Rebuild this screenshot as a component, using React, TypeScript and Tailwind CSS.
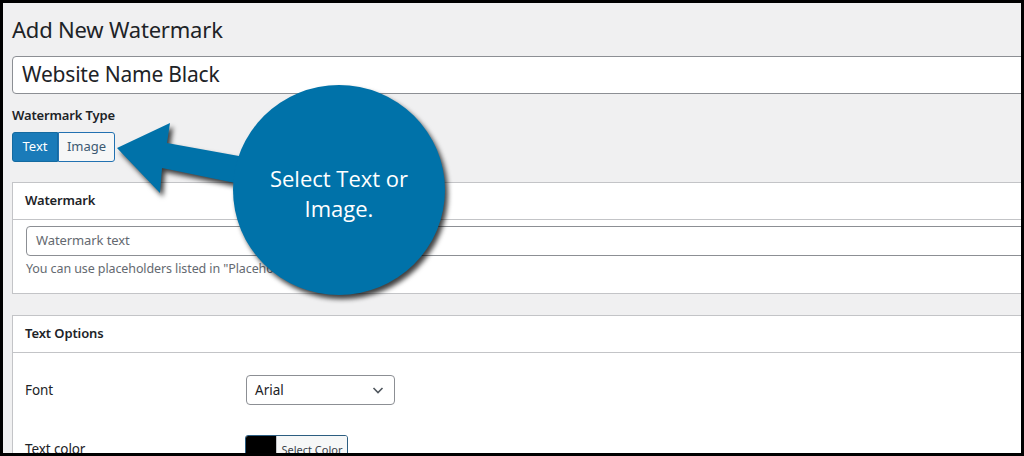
import React from "react";

const F = { fontFamily: '"Segoe UI", "Noto Sans", "Open Sans", sans-serif' };

export default function App() {
  return (
    <div
      className="relative box-border h-[456px] w-[1024px] overflow-hidden border-[3px] border-black bg-[#f0f0f1] text-[#1d2327]"
      style={F}
    >
      <div className="w-[1060px] pl-[9px] pt-[11px]">
        <h1 className="h-[30px] text-[22px] font-normal leading-[30px] tracking-[-0.2px]">Add New Watermark</h1>
        <div className="mt-[12px] box-border flex h-[38px] items-center rounded-[4px] border border-[#8c8f94] bg-white pl-[9px] text-[21px] tracking-[-0.2px]">
          Website Name Black
        </div>
        <div className="mt-[11px] h-[20px] text-[13px] font-semibold leading-[20px] tracking-[-0.15px]">Watermark Type</div>
        <div className="mt-[7px] flex h-[30px] w-[103px]">
          <div className="box-border flex h-full w-[46px] items-center justify-center rounded-l-[3px] border border-[#146aa0] bg-[#1a7bb9] text-[13px] text-white">
            Text
          </div>
          <div className="box-border flex h-full flex-1 items-center justify-center rounded-r-[3px] border border-[#2271b1] bg-[#f6f7f7] text-[13px] text-[#3c5a72]">
            Image
          </div>
        </div>

        <div className="mt-[20px] box-border h-[112px] border border-[#c3c4c7] bg-white">
          <div className="box-border flex h-[37px] items-center border-b border-[#c3c4c7] pl-[12px] text-[13px] font-semibold tracking-[-0.15px]">
            Watermark
          </div>
          <div className="pl-[13px] pt-[6px]">
            <div className="box-border flex h-[30px] items-center rounded-[4px] border border-[#8c8f94] pl-[9px] text-[13px] tracking-[-0.1px] text-[#646970]">
              Watermark text
            </div>
            <div className="mt-[3px] text-[12.5px] leading-[20px] tracking-[-0.1px] text-[#646970]">
              You can use placeholders listed in "Placeholders" section below.
            </div>
          </div>
        </div>

        <div className="mt-[21px] box-border h-[200px] border border-[#c3c4c7] bg-white">
          <div className="box-border flex h-[37px] items-center border-b border-[#c3c4c7] pl-[12px] text-[13px] font-semibold tracking-[-0.1px]">
            Text Options
          </div>
          <div className="flex items-center pl-[12px] pt-[22px]">
            <div className="w-[221px] text-[13.5px] tracking-[-0.1px]">Font</div>
            <div className="box-border flex h-[30px] w-[149px] items-center justify-between rounded-[4px] border border-[#8c8f94] pl-[8px] pr-[8px] text-[13.5px]">
              <span>Arial</span>
              <svg width="16" height="16" viewBox="0 0 16 16" fill="none">
                <path d="M3.5 6 L8 10.5 L12.5 6" stroke="#50575e" strokeWidth="1.6" />
              </svg>
            </div>
          </div>
          <div className="flex items-start pl-[12px] pt-[30px]">
            <div className="w-[220px] pt-[4px] text-[13.5px] tracking-[-0.1px]">Text color</div>
            <div className="box-border flex h-[30px] w-[103px] overflow-hidden rounded-[3px] border border-[#2c5d80]">
              <div className="h-full w-[30px] bg-black" />
              <div className="flex flex-1 items-center justify-center border-l border-[#c3c4c7] bg-[#f6f7f7] text-[11px] text-[#3c434a]">
                Select Color
              </div>
            </div>
          </div>
        </div>
      </div>

      {/* Callout overlay */}
      <svg
        className="absolute left-[-3px] top-[-3px]"
        width="1024"
        height="456"
        viewBox="0 0 1024 456"
        style={{ filter: "drop-shadow(3px 4px 2.5px rgba(0,0,0,0.75))" }}
      >
        <path
          d="M117 148 L170 123 L167 143 L250 158 L250 186 L162 168 L160 193 Z"
          fill="#0072a9"
        />
        <ellipse cx="339" cy="190" rx="106" ry="105" fill="#0072a9" />
      </svg>
      <div
        className="absolute left-[236px] top-[160px] w-[200px] text-center text-[22px] leading-[30px] text-white"
        style={{ fontFamily: '"Open Sans", "Noto Sans", sans-serif' }}
      >
        Select Text or
        <br />
        Image.
      </div>
    </div>
  );
}
